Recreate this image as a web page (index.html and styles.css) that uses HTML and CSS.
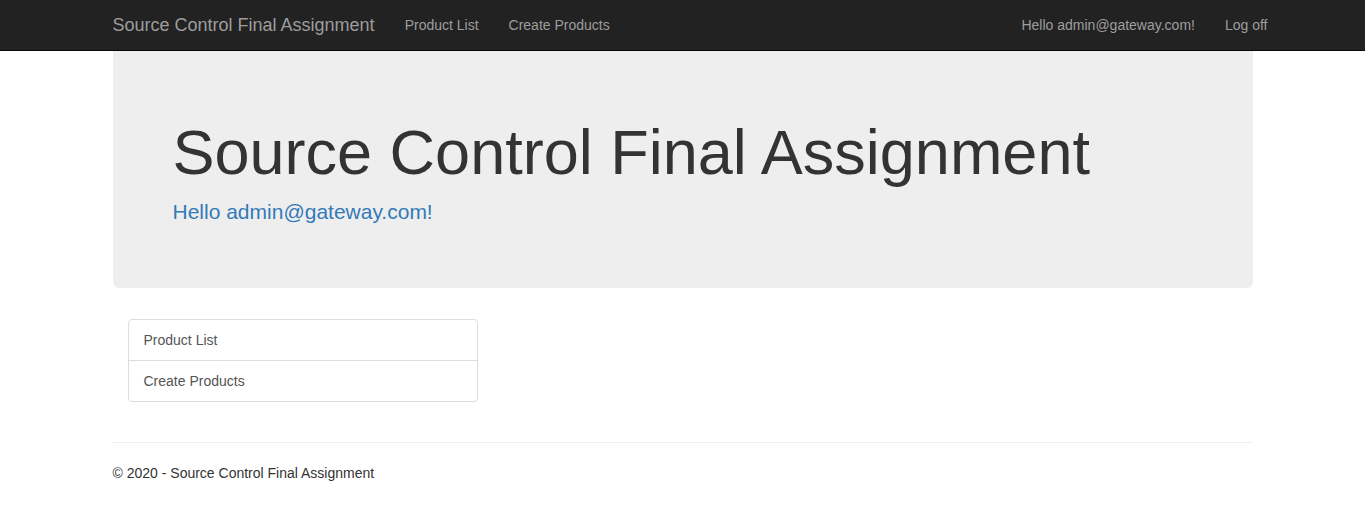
FILE: index.html
```html
<!DOCTYPE html>
<html>
<head>
<meta charset="utf-8">
<title>Source Control Final Assignment</title>
<link rel="stylesheet" href="styles.css">
</head>
<body>
<nav class="navbar">
  <div class="container nav-inner">
    <div class="nav-left">
      <a class="brand" href="#">Source Control Final Assignment</a>
      <a class="nav-link" href="#">Product List</a>
      <a class="nav-link" href="#">Create Products</a>
    </div>
    <div class="nav-right">
      <a class="nav-link" href="#">Hello admin@gateway.com!</a>
      <a class="nav-link" href="#">Log off</a>
    </div>
  </div>
</nav>
<div class="container">
  <div class="jumbotron">
    <h1>Source Control Final Assignment</h1>
    <p class="lead"><a href="#">Hello admin@gateway.com!</a></p>
  </div>
  <div class="content">
    <div class="list-group">
      <a class="list-item" href="#">Product List</a>
      <a class="list-item" href="#">Create Products</a>
    </div>
  </div>
  <hr class="rule">
  <footer class="footer">
    <p>&copy; 2020 - Source Control Final Assignment</p>
  </footer>
</div>
</body>
</html>
```

FILE: styles.css
```css
* { box-sizing: border-box; }
html, body { margin: 0; padding: 0; }
body {
  font-family: "Liberation Sans", Arial, Helvetica, sans-serif;
  font-size: 14px;
  line-height: 1.42857143;
  color: #333;
  background: #fff;
}
a { text-decoration: none; }
.container {
  width: 1170px;
  margin: 0 auto;
  padding: 0 15px;
}
.navbar {
  background: #222;
  border-bottom: 1px solid #080808;
  height: 51px;
}
.nav-inner {
  display: flex;
  justify-content: space-between;
  height: 50px;
}
.nav-left { display: flex; margin-left: -15px; }
.nav-right { display: flex; margin-right: -30px; }
.brand {
  font-size: 18px;
  line-height: 20px;
  padding: 15px;
  color: #9d9d9d;
}
.nav-link {
  font-size: 14px;
  line-height: 20px;
  padding: 15px;
  color: #9d9d9d;
}
.jumbotron {
  background: #eee;
  border-radius: 0 0 6px 6px;
  padding: 47px 60px 47px;
  margin-bottom: 30px;
}
.jumbotron h1 {
  font-size: 63px;
  font-weight: 500;
  line-height: 1.1;
  margin: 20px 0 10px;
  color: #333;
}
.lead {
  font-size: 21px;
  line-height: 30px;
  margin: 0 0 14px;
}
.lead a { color: #337ab7; }
.content { padding: 1px 15px 0; }
.list-group {
  width: 350px;
  border: 1px solid #ddd;
  border-radius: 4px;
  margin-bottom: 20px;
  display: flex;
  flex-direction: column;
}
.list-item {
  display: block;
  padding: 10px 15px;
  line-height: 20px;
  color: #555;
}
.list-item + .list-item { border-top: 1px solid #ddd; }
.rule {
  border: 0;
  border-top: 1px solid #eee;
  margin: 40px 0 20px;
}
.footer p { margin: 0 0 10px; }
```
